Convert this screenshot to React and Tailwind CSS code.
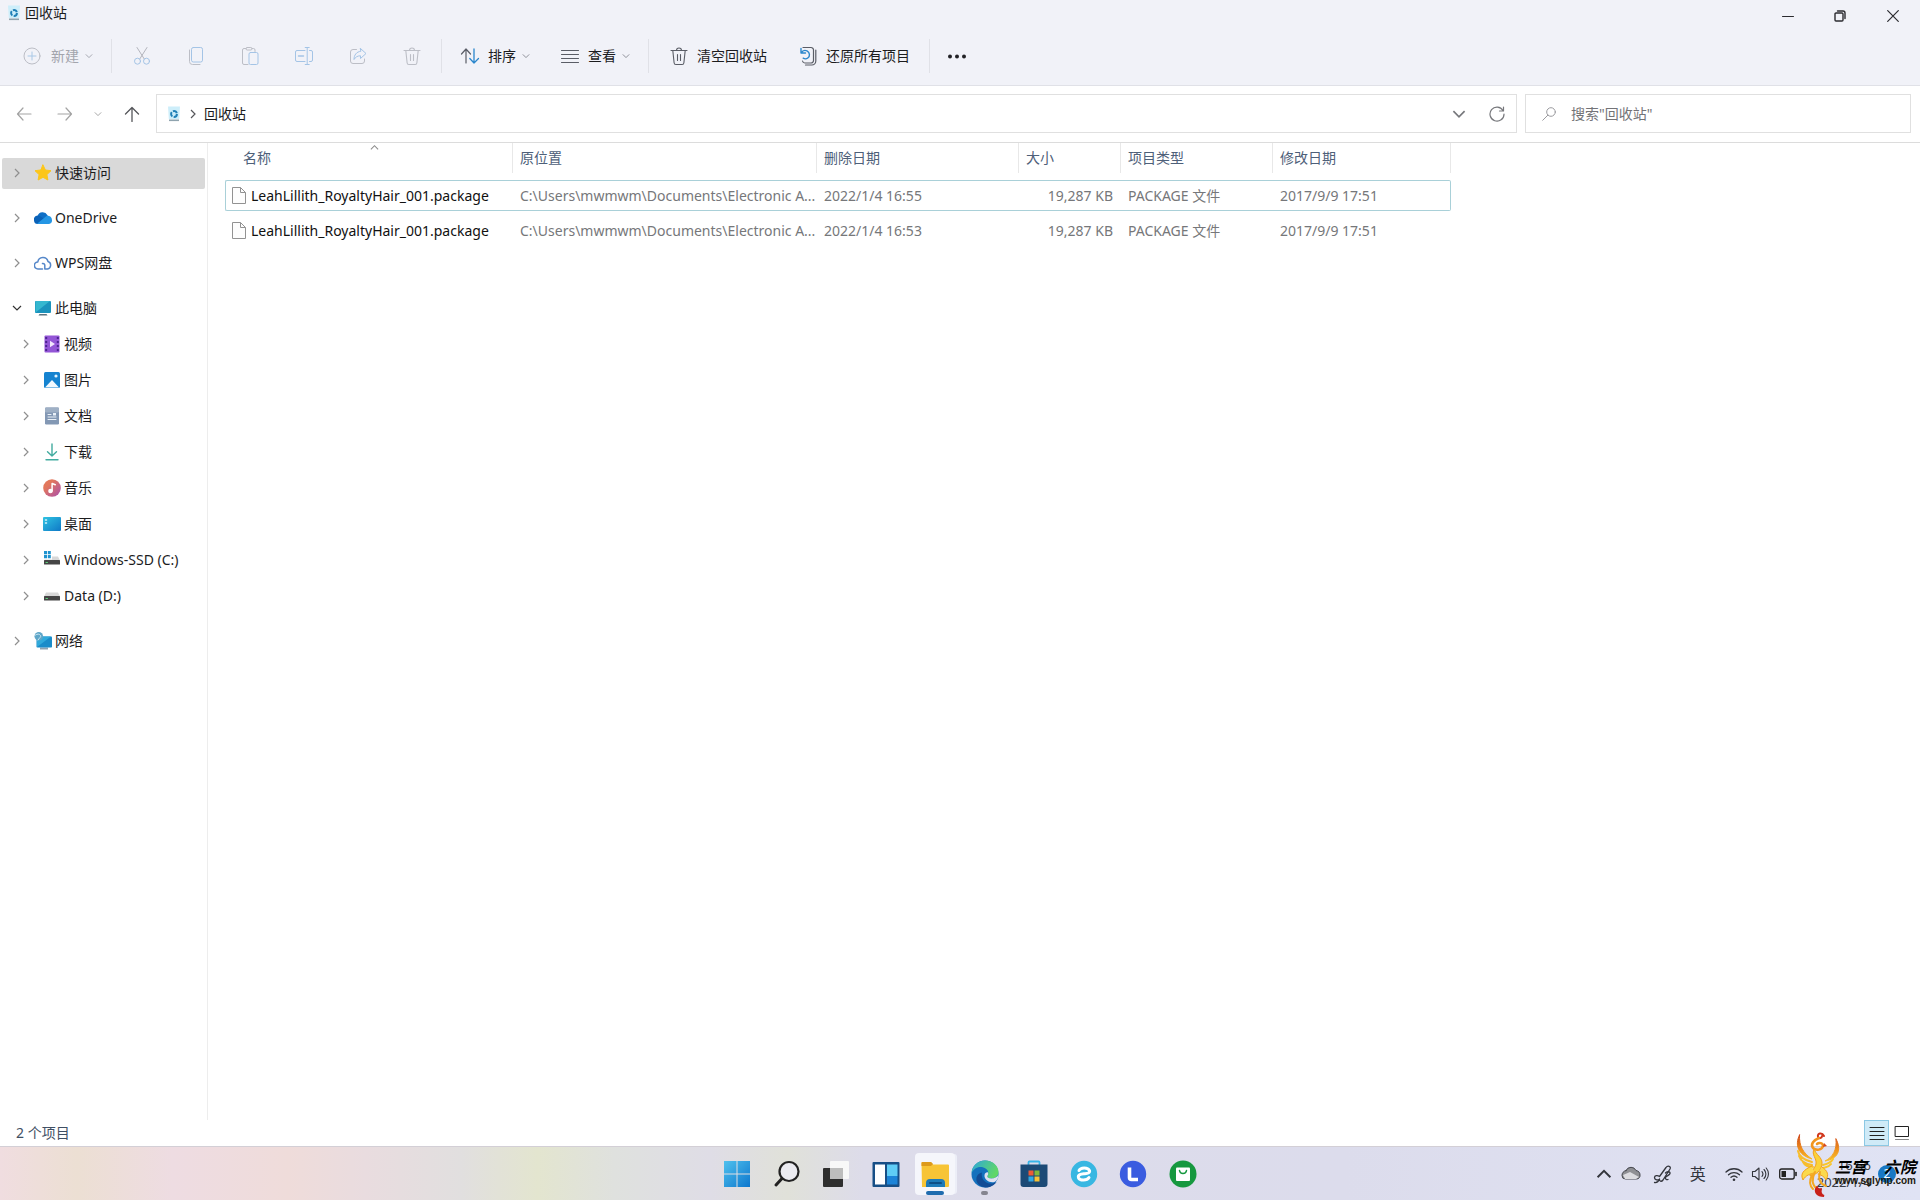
import React from 'react';
import clsx from 'clsx';

/* ---------- toolbar icons ---------- */

const Svg = ({ size = 20, className, children, box }) => (
  <svg
    width={size}
    height={size}
    viewBox={box || `0 0 ${size} ${size}`}
    fill="none"
    strokeLinecap="round"
    strokeLinejoin="round"
    className={clsx('shrink-0', className)}
    aria-hidden="true"
  >
    {children}
  </svg>
);

const RecycleIcon = () => (
  <svg width="12" height="16" viewBox="0 0 12 16" fill="none" className="shrink-0" aria-hidden="true">
    <path d="M0 0.500h12l-.8 12.500H.8z" fill="#cdeefa" />
    <path d="M1 13.500h10v1.600H1z" fill="#8fa3ae" />
    <circle cx="6" cy="8" r="2.900" stroke="#1f7fb6" strokeWidth="2" strokeDasharray="4.800 1.300" />
  </svg>
);

const Chevron = ({ dir = 'right', className, size = 10 }) => {
  const paths = {
    right: 'M3 1l4 4-4 4',
    down: 'M1 3l4 4 4-4',
    up: 'M1 7l4-4 4 4',
  };
  return (
    <svg width={size} height={size} viewBox="0 0 10 10" fill="none" stroke="currentColor" strokeWidth="1.200" className={clsx('shrink-0', className)} aria-hidden="true">
      <path d={paths[dir]} />
    </svg>
  );
};

const PlusIcon = () => (
  <Svg size={18}>
    <circle cx="9" cy="9" r="8" stroke="#bcbec6" />
    <path d="M9 5v8M5 9h8" stroke="#a9c8e6" />
  </Svg>
);

const CutIcon = () => (
  <Svg size={20}>
    <path d="M5 1.500l7.200 11.400M15 1.500L7.800 12.900" stroke="#b4b5bd" />
    <circle cx="5.500" cy="15.200" r="3" stroke="#a4c4e6" />
    <circle cx="14.500" cy="15.200" r="3" stroke="#a4c4e6" />
  </Svg>
);

const CopyIcon = () => (
  <Svg size={20}>
    <rect x="5.500" y="1.500" width="11" height="14.500" rx="1.800" stroke="#a4c4e6" />
    <path d="M3.500 4v11.500a3 3 0 0 0 3 3H14" stroke="#bcbec6" />
  </Svg>
);

const PasteIcon = () => (
  <Svg size={20}>
    <path d="M8 18.500H4a1.500 1.500 0 0 1-1.500-1.500V4A1.500 1.500 0 0 1 4 2.500h2M12 2.500h1.500A1.500 1.500 0 0 1 15 4v1.500" stroke="#bcbec6" />
    <rect x="6" y="1.500" width="6" height="2.500" rx="1.200" stroke="#bcbec6" />
    <rect x="9" y="6.500" width="9" height="12" rx="1.500" stroke="#a4c4e6" />
  </Svg>
);

const RenameIcon = () => (
  <Svg size={20}>
    <path d="M11 4.500H3A1.500 1.500 0 0 0 1.500 6v8A1.500 1.500 0 0 0 3 15.500h8M15.500 4.500h1.500A1.500 1.500 0 0 1 18.500 6v8a1.500 1.500 0 0 1-1.500 1.500h-1.500" stroke="#a4c4e6" />
    <path d="M4.500 10h5" stroke="#a4c4e6" strokeWidth="1.500" />
    <path d="M13.200 2v16M11.200 1.500h4M11.200 18.500h4" stroke="#a4c4e6" />
  </Svg>
);

const ShareIcon = () => (
  <Svg size={20}>
    <path d="M8.500 3.500H5A2.500 2.500 0 0 0 2.500 6v9A2.500 2.500 0 0 0 5 17.500h9a2.500 2.500 0 0 0 2.500-2.500v-2" stroke="#bcbec6" />
    <path d="M12.500 2.500l5.500 5-5.500 5V9.800C9.500 9.800 7.500 11 6 13.500 6 9 8.500 5.800 12.500 5.300z" stroke="#a4c4e6" />
  </Svg>
);

const TrashIcon = ({ color }) => (
  <Svg size={20}>
    <path d="M2 4.500h16M7.500 4.500a2.500 2.500 0 0 1 5 0M3.800 4.500l1.300 12.300a1.800 1.800 0 0 0 1.800 1.700h6.200a1.800 1.800 0 0 0 1.800-1.700l1.300-12.300M8.500 8.500v6M11.500 8.500v6" stroke={color} strokeWidth="1.100" />
  </Svg>
);

const SortIcon = () => (
  <Svg size={20}>
    <path d="M6 17V3M1.500 8L6 3l4.500 5" stroke="#5a5d66" strokeWidth="1.200" />
    <path d="M14 3v14M9.800 12.500L14 17l4.500-4.500" stroke="#2a86cc" strokeWidth="1.300" />
  </Svg>
);

const ViewIcon = () => (
  <Svg size={20}>
    <path d="M1.500 4.500h17M1.500 8.500h17M1.500 12.500h17M1.500 16.500h17" stroke="#5a5d66" strokeWidth="1.100" />
  </Svg>
);

const RestoreIcon = () => (
  <Svg size={20}>
    <path d="M5 1.500h8A2.500 2.500 0 0 1 15.500 4v10.500A2.500 2.500 0 0 1 13 17H7a2.500 2.500 0 0 1-2.500-2" stroke="#5a5d66" strokeWidth="1.200" />
    <path d="M17.800 4v11a4 4 0 0 1-4 4H7.500" stroke="#5a5d66" strokeWidth="1.200" />
    <path d="M3 2.500V7h4.500M3.200 7C4.500 4.500 7 4 9 4.800c3 1.500 3.200 5.500.8 7.200-1.500 1.200-3.300 1-4.600.2" stroke="#2a86cc" strokeWidth="1.400" />
  </Svg>
);

/* ---------- tree icons ---------- */

const StarIcon = () => (
  <Svg size={18}>
    <path d="M9 1l2.400 5 5.600.7-4.100 3.900 1 5.400L9 13.300 4.100 16l1-5.400L1 6.700 6.600 6z" fill="#fcc61a" stroke="#fcc61a" />
  </Svg>
);

const OneDriveIcon = () => (
  <Svg size={18}>
    <path d="M3.500 7A5.500 5.500 0 0 1 13.500 6.200L16 12H3z" fill="#0f6fc6" />
    <path d="M0 11.500A4 4 0 0 1 6.500 7.500l6 3.500-8 4H4A3.800 3.800 0 0 1 0 11.500z" fill="#0a62b8" />
    <path d="M3 14.700L12.500 7a4.200 4.200 0 0 1 5.500 4 3.700 3.700 0 0 1-3.500 4H4.500z" fill="#2596e4" />
  </Svg>
);

const WpsIcon = () => (
  <Svg size={18}>
    <path d="M8.500 15H4A3.500 3.500 0 0 1 3.800 8 5.200 5.200 0 0 1 14 7.500a3.900 3.900 0 0 1-.5 7.500h-2.700V11A2 2 0 0 0 8.500 9.500" stroke="#5587c9" strokeWidth="1.500" />
  </Svg>
);

const PcIcon = () => (
  <Svg size={18}>
    <path d="M5.500 15h7l1 1.500h-9z" fill="#5d7480" />
    <rect x="1" y="2" width="16" height="12" rx="1" fill="#1b93bd" />
    <path d="M1.500 13.500V3a1 1 0 0 1 1-1H16z" fill="#35b7cf" />
  </Svg>
);

const VideoIcon = () => (
  <Svg size={18}>
    <rect x="1.500" y="0.500" width="15" height="17" rx="1" fill="#9355d6" />
    <path d="M3.200 2v14M14.800 2v14" stroke="#4c2391" strokeWidth="2" strokeDasharray="2 2" strokeLinecap="butt" />
    <path d="M7 5.800v6.400l5-3.200z" fill="#f2e6fd" />
  </Svg>
);

const PictureIcon = () => (
  <Svg size={18}>
    <rect x="1" y="1" width="16" height="16" rx="1.500" fill="#1583d0" />
    <path d="M2 16.500l7-7.500 7 7.500z" fill="#f2f9fe" />
    <circle cx="13" cy="5" r="1.600" fill="#e5f4fd" />
  </Svg>
);

const DocIcon = () => (
  <Svg size={18}>
    <rect x="2" y="0.500" width="14" height="17" rx="1.200" fill="#8398b4" />
    <rect x="2" y="0.500" width="14" height="5" rx="1.200" fill="#9fb0c5" />
    <path d="M5 7.500h3M5 10h8M5 12.500h8" stroke="#eaf1f8" />
    <rect x="10" y="6" width="3" height="2.500" fill="#eaf1f8" />
  </Svg>
);

const DownloadIcon = () => (
  <Svg size={18}>
    <path d="M9 1v12M4.500 8.800L9 13l4.500-4.200" stroke="#42ab9f" strokeWidth="1.400" />
    <path d="M3 16.800h12" stroke="#42ab9f" strokeWidth="1.400" />
  </Svg>
);

const MusicIcon = () => (
  <Svg size={18}>
    <defs>
      <linearGradient id="music" x1="0" y1="0" x2="1" y2="1">
        <stop offset="0.300" stopColor="#e2775c" />
        <stop offset="1" stopColor="#a94fae" />
      </linearGradient>
    </defs>
    <circle cx="9" cy="9" r="8.800" fill="url(#music)" />
    <circle cx="7.500" cy="12" r="2.300" fill="#fff" />
    <path d="M9.100 12V4.500l3.200 1.300" stroke="#fff" strokeWidth="1.500" />
  </Svg>
);

const DesktopIcon = () => (
  <Svg size={18}>
    <defs>
      <linearGradient id="desk" x1="0" y1="0" x2="1" y2="1">
        <stop offset="0" stopColor="#2fc3e2" />
        <stop offset="1" stopColor="#0f78c6" />
      </linearGradient>
    </defs>
    <rect x="0" y="2" width="18" height="14" rx="1" fill="url(#desk)" />
    <path d="M2.500 5h1M2.500 8h1" stroke="#d8f5fd" strokeWidth="1.500" />
  </Svg>
);

const DiskIcon = ({ system }) => (
  <Svg size={18}>
    <path d="M3 5.500h12l2 4H1z" fill="#d8d8d8" />
    <rect x="1" y="9" width="16" height="4.500" rx="0.500" fill="#454545" />
    <path d="M3 11.500h1.500" stroke="#5fd07c" />
    {system && (
      <g>
        <rect x="0" y="0" width="9" height="8.500" fill="#fff" />
        <path d="M1 0h3v3.200H1zM4.800 0h3v3.200h-3zM1 4h3v3.200H1zM4.800 4h3v3.200h-3z" fill="#1f93cf" />
      </g>
    )}
  </Svg>
);

const NetworkIcon = () => (
  <Svg size={18}>
    <path d="M6 15.500h8v2H6z" fill="#8fa3b0" />
    <rect x="2.500" y="4.500" width="15.500" height="11" rx="0.800" fill="#1a8cc9" />
    <path d="M3 15V8l6-3.500h8z" fill="#31aadb" />
    <circle cx="4.800" cy="4.300" r="4.300" fill="#5fa6c8" />
    <path d="M1.500 3c2-1.500 4-1 5 .5S5 6 4 8" stroke="#cde7f2" />
  </Svg>
);

const FileIcon = () => (
  <svg width="14" height="17" viewBox="0 0 14 17" fill="none" className="shrink-0" aria-hidden="true">
    <path d="M.5.5h8l5 5v11H.5z" fill="#fdfdfd" stroke="#929292" />
    <path d="M8.500.5v5h5" stroke="#929292" />
  </svg>
);

/* ---------- data ---------- */

const tree = [
  { label: '快速访问', icon: <StarIcon />, selected: true },
  { label: 'OneDrive', icon: <OneDriveIcon /> },
  { label: 'WPS网盘', icon: <WpsIcon /> },
  {
    label: '此电脑',
    icon: <PcIcon />,
    children: [
      { label: '视频', icon: <VideoIcon /> },
      { label: '图片', icon: <PictureIcon /> },
      { label: '文档', icon: <DocIcon /> },
      { label: '下载', icon: <DownloadIcon /> },
      { label: '音乐', icon: <MusicIcon /> },
      { label: '桌面', icon: <DesktopIcon /> },
      { label: 'Windows-SSD (C:)', icon: <DiskIcon system /> },
      { label: 'Data (D:)', icon: <DiskIcon /> },
    ],
  },
  { label: '网络', icon: <NetworkIcon /> },
];

const files = [
  {
    name: 'LeahLillith_RoyaltyHair_001.package',
    from: 'C:\\Users\\mwmwm\\Documents\\Electronic A...',
    deleted: '2022/1/4 16:55',
    size: '19,287 KB',
    type: 'PACKAGE 文件',
    modified: '2017/9/9 17:51',
    focused: true,
  },
  {
    name: 'LeahLillith_RoyaltyHair_001.package',
    from: 'C:\\Users\\mwmwm\\Documents\\Electronic A...',
    deleted: '2022/1/4 16:53',
    size: '19,287 KB',
    type: 'PACKAGE 文件',
    modified: '2017/9/9 17:51',
  },
];

/* ---------- window parts ---------- */

const TitleBar = () => (
  <header className="flex h-8 items-start justify-between">
    <div className="flex h-[26px] items-center gap-[5px] pl-2">
      <RecycleIcon />
      <h1>回收站</h1>
    </div>
    <div className="flex h-8 text-[#2b2b2f]">
      <button aria-label="最小化" className="grid w-[52px] place-items-center">
        <Svg size={12}><path d="M0.500 6.500h11" stroke="currentColor" /></Svg>
      </button>
      <button aria-label="还原" className="grid w-[52px] place-items-center">
        <Svg size={12}>
          <rect x="1" y="3" width="8" height="8" rx="1" stroke="currentColor" strokeWidth="1.400" />
          <path d="M3.500 1H9a2 2 0 0 1 2 2v5.500" stroke="currentColor" strokeWidth="1.400" />
        </Svg>
      </button>
      <button aria-label="关闭" className="grid w-[54px] place-items-center">
        <Svg size={12}><path d="M.7.7l10.600 10.600M11.300.7L.7 11.300" stroke="currentColor" strokeWidth="1.200" /></Svg>
      </button>
    </div>
  </header>
);

const Divider = () => <span className="h-[34px] w-px bg-[#e0e1e7]" />;

const IconTool = ({ label, children }) => (
  <button disabled aria-label={label} className="grid h-9 w-[54px] place-items-center">
    {children}
  </button>
);

const Toolbar = () => (
  <div role="toolbar" className="flex h-12 items-center">
    <button disabled className="flex w-[111px] items-center pl-[23px] text-[#a3a5ad]">
      <PlusIcon />
      <span className="pr-[6px] pl-[10px]">新建</span>
      <Chevron dir="down" size={8} />
    </button>
    <Divider />
    <div className="flex w-[329px] pl-[3px]">
      <IconTool label="剪切"><CutIcon /></IconTool>
      <IconTool label="复制"><CopyIcon /></IconTool>
      <IconTool label="粘贴"><PasteIcon /></IconTool>
      <IconTool label="重命名"><RenameIcon /></IconTool>
      <IconTool label="共享"><ShareIcon /></IconTool>
      <IconTool label="删除"><TrashIcon color="#bcbec6" /></IconTool>
    </div>
    <Divider />
    <div className="flex w-[206px] gap-[30px] pl-[18px]">
      <button className="flex items-center">
        <SortIcon />
        <span className="pr-[6px] pl-2">排序</span>
        <Chevron dir="down" size={8} className="text-[#8a8c94]" />
      </button>
      <button className="flex items-center">
        <ViewIcon />
        <span className="pr-[6px] pl-2">查看</span>
        <Chevron dir="down" size={8} className="text-[#8a8c94]" />
      </button>
    </div>
    <Divider />
    <div className="flex w-[280px] gap-[31px] pl-5">
      <button className="flex items-center gap-2">
        <TrashIcon color="#5a5d66" />
        清空回收站
      </button>
      <button className="flex items-center gap-2">
        <RestoreIcon />
        还原所有项目
      </button>
    </div>
    <Divider />
    <button aria-label="查看更多" className="grid h-9 w-[54px] place-items-center">
      <Svg size={20}>
        <g fill="#222226">
          <circle cx="3" cy="10.500" r="2" />
          <circle cx="10" cy="10.500" r="2" />
          <circle cx="17" cy="10.500" r="2" />
        </g>
      </Svg>
    </button>
  </div>
);

const AddressRow = () => (
  <div className="flex items-center border-b border-[#dcdcdc] pt-2 pr-[9px] pb-[9px] pl-4">
    <nav className="flex w-[140px] items-center text-[#a3a3a3]" aria-label="导航">
      <button aria-label="后退" className="grid size-4 place-items-center">
        <Svg size={16}><path d="M15 8H1.500M7 2L1.500 8 7 14" stroke="currentColor" strokeWidth="1.200" /></Svg>
      </button>
      <button aria-label="前进" className="ml-[25px] grid size-4 place-items-center">
        <Svg size={16}><path d="M1 8h13.500M9 2l5.500 6L9 14" stroke="currentColor" strokeWidth="1.200" /></Svg>
      </button>
      <button aria-label="最近位置" className="ml-[17px] grid size-4 place-items-center">
        <Chevron dir="down" size={8} />
      </button>
      <button aria-label="向上" className="ml-[18px] grid size-4 place-items-center text-[#55565a]">
        <Svg size={16}><path d="M8 15.500V1.500M1.500 8L8 1.500 14.500 8" stroke="currentColor" strokeWidth="1.300" /></Svg>
      </button>
    </nav>
    <div className="flex h-[39px] flex-1 items-center border border-[#e0e0e0] pr-[11px] pl-[11px]">
      <RecycleIcon />
      <Chevron className="mr-[6px] ml-2 text-[#55565a]" />
      <span className="flex-1">回收站</span>
      <button aria-label="以前的位置" className="mr-[23px] text-[#77787c]">
        <Chevron dir="down" size={14} />
      </button>
      <button aria-label="刷新" className="text-[#77787c]">
        <Svg size={16}>
          <path d="M14 4.500A7 7 0 1 0 15 8M14.500 1v4h-4" stroke="currentColor" strokeWidth="1.200" />
        </Svg>
      </button>
    </div>
    <label className="ml-2 flex h-[39px] w-[386px] items-center border border-[#e0e0e0] pl-4">
      <Svg size={14} className="mr-[15px]">
        <circle cx="9" cy="5" r="4.300" stroke="#9b9b9f" />
        <path d="M5.800 8.200L.7 13.300" stroke="#9b9b9f" />
      </Svg>
      <input
        type="text"
        aria-label="搜索"
        placeholder={'搜索"回收站"'}
        className="w-full bg-transparent outline-none placeholder:text-[#737377]"
      />
    </label>
  </div>
);

const TreeItem = ({ item, level = 0 }) => (
  <li>
    <div className="flex h-9 items-center pl-[2px]">
      <button
        className={clsx(
          'flex h-[31px] w-[203px] items-center rounded-[2px]',
          level ? 'pl-[19px]' : 'pl-[10px]',
          item.selected && 'bg-[#d9d9d9]'
        )}
      >
        <Chevron
          dir={item.children ? 'down' : 'right'}
          className={item.children ? 'text-[#333]' : 'text-[#8f8f8f]'}
        />
        <span className="pr-[3px] pl-3">{item.icon}</span>
        {item.label}
      </button>
    </div>
    {item.children && (
      <ul>
        {item.children.map((child) => (
          <TreeItem key={child.label} item={child} level={level + 1} />
        ))}
      </ul>
    )}
  </li>
);

const HeaderCell = ({ children, className, first }) => (
  <th scope="col" className="h-[33px] p-0 text-left align-top font-normal">
    <div className={clsx('relative flex h-[30px] items-center border-r border-[#e8e8e8]', className)}>
      {first && <Chevron dir="up" size={9} className="absolute top-0 left-[145px] text-[#8b8b8b]" />}
      {children}
    </div>
  </th>
);

const FileTable = () => (
  <table className="-mt-1 w-[1226px] table-fixed border-separate border-spacing-x-0 border-spacing-y-1 whitespace-nowrap">
    <colgroup>
      <col className="w-[288px]" />
      <col className="w-[304px]" />
      <col className="w-[202px]" />
      <col className="w-[102px]" />
      <col className="w-[152px]" />
      <col className="w-[178px]" />
    </colgroup>
    <thead className="text-[#4e6079]">
      <tr>
        <HeaderCell first className="pl-[18px]">名称</HeaderCell>
        <HeaderCell className="pl-[7px]">原位置</HeaderCell>
        <HeaderCell className="pl-[7px]">删除日期</HeaderCell>
        <HeaderCell className="pl-[7px]">大小</HeaderCell>
        <HeaderCell className="pl-[7px]">项目类型</HeaderCell>
        <HeaderCell className="pl-[7px]">修改日期</HeaderCell>
      </tr>
    </thead>
    <tbody className="text-[#76777a]">
      {files.map((file) => {
        const line = file.focused ? 'border-[#a9d0d8]' : 'border-transparent';
        const cell = clsx('h-[31px] border-y py-0 pr-2 pl-[7px]', line);
        return (
          <tr key={file.deleted}>
            <td className={clsx('h-[31px] rounded-l-[2px] border-y border-l py-0 pr-2 pl-[6px] text-[#111]', line)}>
              <div className="flex items-center gap-[5px]">
                <FileIcon />
                {file.name}
              </div>
            </td>
            <td className={cell}>{file.from}</td>
            <td className={cell}>{file.deleted}</td>
            <td className={clsx(cell, 'text-right')}>{file.size}</td>
            <td className={cell}>{file.type}</td>
            <td className={clsx(cell, 'rounded-r-[2px] border-r')}>{file.modified}</td>
          </tr>
        );
      })}
    </tbody>
  </table>
);

const StatusBar = () => (
  <footer className="flex h-[26px] items-center justify-between pr-[5px] pl-4 text-[#3f4f63]">
    <span>2 个项目</span>
    <div className="flex items-center">
      <button aria-label="详细信息" className="grid h-[26px] w-[25px] place-items-center border border-[#8cc8e4] bg-[#cfeaf7]">
        <Svg size={16} className="text-[#222]">
          <path d="M1 2.500h14M1 6.500h14M1 10.500h14M1 14.500h14" stroke="currentColor" />
        </Svg>
      </button>
      <button aria-label="大图标" className="grid h-[26px] w-[26px] place-items-center">
        <Svg size={16} className="text-[#222]">
          <rect x="1.500" y="1.500" width="13" height="10" stroke="currentColor" />
          <path d="M1.500 14.500h13" stroke="#888" />
        </Svg>
      </button>
    </div>
  </footer>
);

/* ---------- taskbar ---------- */

const StartIcon = () => (
  <Svg size={28}>
    <defs>
      <linearGradient id="start" x1="0" y1="0" x2="28" y2="28" gradientUnits="userSpaceOnUse">
        <stop offset="0" stopColor="#52c4ef" />
        <stop offset="1" stopColor="#0a74cc" />
      </linearGradient>
    </defs>
    <path d="M1 1h12.500v12.500H1zM14.500 1H27v12.500H14.500zM1 14.500h12.500V27H1zM14.500 14.500H27V27H14.500z" fill="url(#start)" />
  </Svg>
);

const SearchIcon = () => (
  <Svg size={28}>
    <circle cx="16" cy="11.500" r="9.500" stroke="#222" strokeWidth="2.200" fill="#ebebf0" />
    <path d="M9 18.500L3 25" stroke="#222" strokeWidth="3" />
  </Svg>
);

const TaskViewIcon = () => (
  <Svg size={28}>
    <rect x="1" y="8" width="20" height="19" rx="1" fill="#2e2e2e" />
    <rect x="8" y="1" width="19" height="18" rx="1" fill="#f8f8f8" />
    <rect x="8" y="8" width="13" height="11" fill="#bdbdbd" />
  </Svg>
);

const WidgetsIcon = () => (
  <Svg size={28}>
    <rect x="0.500" y="2" width="27" height="25" rx="1" fill="#174f86" />
    <rect x="3" y="4.500" width="10" height="20" fill="#fff" />
    <rect x="15" y="4.500" width="10.500" height="11.500" fill="#5fcdf6" />
    <rect x="15" y="16" width="10.500" height="8.500" fill="#1c84d8" />
  </Svg>
);

const ExplorerIcon = () => (
  <Svg size={28}>
    <path d="M0.500 3a1 1 0 0 1 1-1H10l2 2.500h15a1 1 0 0 1 1 1V26a1 1 0 0 1-1 1h-26z" fill="#f7c436" />
    <path d="M.5 3a1 1 0 0 1 1-1H10l2 2-2 2H.5z" fill="#dd9a1c" />
    <path d="M5 27v-4a4 4 0 0 1 4-4h11a4 4 0 0 1 4 4v4z" fill="#1d7ab8" />
    <path d="M9 23h11" stroke="#0d4f86" strokeWidth="2" />
  </Svg>
);

const EdgeIcon = () => (
  <Svg size={28}>
    <defs>
      <linearGradient id="edgeTop" x1="0" y1="0" x2="1" y2="0.400">
        <stop offset="0" stopColor="#2da6dc" />
        <stop offset="1" stopColor="#5fd768" />
      </linearGradient>
    </defs>
    <circle cx="14" cy="14" r="13.500" fill="#1471bd" />
    <path d="M0.500 13.500C1 5.500 7 .5 14 .5c8 0 13.500 5.500 13.500 11.500 0 4-3 6.500-7 6.500-3 0-4.500-1.200-4.200-2.500.8-1 1-2 1-3C17.300 9.500 13.500 7 9.500 7 5.500 7 2 9.500.5 13.500z" fill="url(#edgeTop)" />
    <path d="M11 12.500c-1.500 5 2.500 11 8.500 11 2.500 0 4.500-.6 6-1.500-2.200 3.500-6.500 5.500-11 5.500C8 27 4.500 22 5.500 17.500c.6-2.500 2.500-4.300 5.500-5z" fill="#124c95" />
    <path d="M16.300 16c-.3 1.300 1.200 2.500 4.200 2.500 3 0 5.500-1.200 6.800-3.500.2 3-1.500 6.800-5 7.200-4.800.5-9.300-3-8.800-7.200.4-2 2-3 3.500-2.500.5 1.300.1 2.500-.7 3.500z" fill="#dfe1f0" />
  </Svg>
);

const StoreIcon = () => (
  <Svg size={28}>
    <path d="M8.500 5V2.500a1 1 0 0 1 1-1h9a1 1 0 0 1 1 1V5" stroke="#38b4e8" strokeWidth="1.800" />
    <path d="M0.500 4.500h27V24a3 3 0 0 1-3 3h-21a3 3 0 0 1-3-3z" fill="#1c4a76" />
    <path d="M8.500 10.500h5v5h-5z" fill="#ee5a35" />
    <path d="M14.500 10.500h5v5h-5z" fill="#81b83a" />
    <path d="M8.500 16.500h5v5h-5z" fill="#31a7e2" />
    <path d="M14.500 16.500h5v5h-5z" fill="#f8c234" />
  </Svg>
);

const BrowserIcon = () => (
  <Svg size={28}>
    <circle cx="14" cy="14" r="13.200" fill="#38b7e2" />
    <path d="M9 10.500C10.500 7 18 7 19.500 10.500c.8 3-3 3-5.500 3.300s-6.500.7-5.500 4c1.500 3.200 8.500 3 10.500-.3" stroke="#fff" strokeWidth="3" />
  </Svg>
);

const LenovoIcon = () => (
  <Svg size={28}>
    <circle cx="14" cy="14" r="13.200" fill="#3a5ce0" />
    <path d="M10.500 7.500v10a2 2 0 0 0 2 2H19" stroke="#fff" strokeWidth="3.600" strokeLinecap="butt" />
  </Svg>
);

const ShopIcon = () => (
  <Svg size={28}>
    <circle cx="14" cy="14" r="13.500" fill="#16983f" />
    <rect x="7" y="7.500" width="14" height="13.500" rx="1" fill="#fff" />
    <path d="M10.500 10.500c.5 4 6.500 4 7 0" stroke="#16983f" strokeWidth="1.500" />
  </Svg>
);

const apps = [
  { name: '开始', icon: <StartIcon /> },
  { name: '搜索', icon: <SearchIcon /> },
  { name: '任务视图', icon: <TaskViewIcon /> },
  { name: '小组件', icon: <WidgetsIcon /> },
  { name: '文件资源管理器', icon: <ExplorerIcon />, state: 'active' },
  { name: 'Microsoft Edge', icon: <EdgeIcon />, state: 'running' },
  { name: 'Microsoft Store', icon: <StoreIcon /> },
  { name: '浏览器', icon: <BrowserIcon /> },
  { name: '联想电脑管家', icon: <LenovoIcon /> },
  { name: '应用商店', icon: <ShopIcon /> },
];

const TrayIcons = () => (
  <div className="flex items-center text-[#33353c]">
    <button aria-label="显示隐藏的图标" className="mr-[9px]">
      <Chevron dir="up" size={16} />
    </button>
    <Svg size={20} className="mr-3">
      <path d="M5 6.500a5.500 5.500 0 0 1 10 0c3 .5 4 2.500 4 4.500a3.500 3.500 0 0 1-3.500 4h-11A3.500 3.500 0 0 1 1 11.500c0-2.500 1.500-4.500 4-5z" fill="#8f9094" stroke="#44464c" />
      <path d="M2 11l7-3 9 5-3 2H4z" fill="#dcdce0" />
    </Svg>
    <Svg size={20} className="mr-[17px]">
      <path d="M1.500 18.500c2.500.5 4-1 5-3.500M6 15.500c-2 1-4.500 0-4.500-2s3-2.500 5-1L13 3.500c1.500-2.300 5.500-1.500 4 1.500l-7 11c-1.500 2-4 1.500-3.500-1M12.500 9c1.500-2 5-1.500 4.500.5s-3.500 2-4.500 4c-.5 1.500 1 2.500 2.500 2" stroke="currentColor" strokeWidth="1.300" />
    </Svg>
    <button className="mr-[19px] text-base">英</button>
    <Svg size={18} className="mr-2">
      <path d="M1 7a11.500 11.500 0 0 1 16 0M3.500 9.800a8 8 0 0 1 11 0M6 12.300a4.500 4.500 0 0 1 6 0" stroke="currentColor" strokeWidth="1.300" />
      <circle cx="9" cy="14.800" r="1.300" fill="currentColor" />
    </Svg>
    <Svg size={18} className="mr-[10px]">
      <path d="M1.500 6.500v5h2.500l4 3.500V3L4 6.500zM11 6.500c1.200 1.500 1.200 3.500 0 5M13 4.500c2.500 2.500 2.500 6.500 0 9M15.200 3c3 3.500 3 8.500 0 12" stroke="currentColor" strokeWidth="1.100" />
    </Svg>
    <Svg size={18} className="text-[#222]">
      <rect x="0.700" y="4" width="14.500" height="10" rx="2" stroke="currentColor" strokeWidth="1.300" />
      <rect x="2.500" y="6" width="4.500" height="6" fill="currentColor" />
      <path d="M17 7.500v3" stroke="currentColor" strokeWidth="1.600" />
    </Svg>
  </div>
);

const Taskbar = () => (
  <div className="grid h-[54px] grid-cols-[1fr_486px_1fr] items-center border-t border-[#d3cfd6] bg-[linear-gradient(90deg,#f0dde0_0%,#ecdfd3_4%,#eedce2_9%,#efdcda_15%,#e9dcdf_19%,#e1dfdf_24%,#e3e5cf_28%,#dfe1de_32%,#dfdde6_37%,#e0e1d9_41%,#dddcea_45%,#dcdcec_70%,#e0e3f4_100%)]">
    <div />
    <div className="flex justify-between">
      {apps.map((app) => (
        <button
          key={app.name}
          aria-label={app.name}
          className={clsx(
            'relative grid h-[42px] w-10 place-items-center rounded-[4px]',
            app.state === 'active' && 'bg-[#f5f6fb] shadow-[3px_0_0_-1px_#eceef7]'
          )}
        >
          {app.icon}
          {app.state === 'active' && <span className="absolute bottom-0 h-1 w-[18px] rounded-full bg-[#1f6cae]" />}
          {app.state === 'running' && <span className="absolute bottom-0 h-1 w-[7px] rounded-full bg-[#85858f]" />}
        </button>
      ))}
    </div>
    <div className="flex items-center justify-end pr-6">
      <TrayIcons />
      <div className="ml-5 flex items-center">
        <div className="text-right text-[13px] leading-[17px] text-[#3a3c44]">
          <p>16:56</p>
          <p>2022/1/4</p>
        </div>
        <span className="ml-[7px] grid size-[18px] place-items-center rounded-full bg-[#1878c4] text-xs text-white">2</span>
      </div>
    </div>
  </div>
);

const Phoenix = () => (
  <svg width="46" height="68" viewBox="0 0 46 68" fill="none" strokeLinecap="round" className="shrink-0" aria-hidden="true">
    <defs>
      <linearGradient id="flame" x1="0" y1="0" x2="0" y2="68" gradientUnits="userSpaceOnUse">
        <stop offset="0" stopColor="#c5301c" />
        <stop offset="0.300" stopColor="#f0941c" />
        <stop offset="0.550" stopColor="#fcd832" />
        <stop offset="0.750" stopColor="#f4a420" />
        <stop offset="1" stopColor="#c81e18" />
      </linearGradient>
    </defs>
    {/* wings */}
    <path d="M4.500 5C-.5 15 3 25 17 29 8 23 4 16 4.500 5z" fill="url(#flame)" stroke="url(#flame)" />
    <path d="M41 9c6 11 2 20-11 22 8-4 12-11 11-22z" fill="url(#flame)" stroke="url(#flame)" />
    <path d="M3 21c1 6 6 9 14 11M4 26c2 6 7 8 13 9M8 32c2 4 6 5 10 5" stroke="#f7bd2c" strokeWidth="2" />
    <path d="M38 29c-2 4-6 5-10 6M36 34c-2 3-5 3-8 4" stroke="#f9c52c" strokeWidth="2" />
    {/* head and neck */}
    <path d="M29 6c-2-4-7-3-6 1 1 2 4 1 4-1" stroke="#d0361c" strokeWidth="2" />
    <path d="M24 8c-5 2-9 6-6 10 3 3 9 2 10-2 0-3-4-4-6-2" stroke="#f2951e" strokeWidth="2.500" />
    <path d="M29 13l3 3-4 1z" fill="#d8481c" />
    {/* body */}
    <path d="M19 19c-3 6 3 9 2 15-1 5-6 7-6 12 5-1 12-5 12-13 0-6-6-8-8-14z" fill="#fbd23a" stroke="#f2a01e" />
    <path d="M17 36C8 40 5 44 8 50c3-5 7-6 11-7M27 37c6 4 7 8 4 13-2-4-5-5-8-6" fill="#fbd94c" stroke="#f2a01e" />
    {/* tail feathers */}
    <path d="M20 42c-4 8-3 13 2 17M25 42c-2 7 0 12 6 14M17 45c-3 6-2 11 1 14" stroke="#f3a822" strokeWidth="2" />
    <path d="M22 57c-3 5 0 9 7 9-3-1-4-4-3-7" stroke="#c8201a" strokeWidth="2" fill="#c8201a" />
  </svg>
);

const Watermark = () => (
  <div className="pointer-events-none absolute right-1 bottom-[2px] flex items-center">
    <Phoenix />
    <div className="-ml-[6px] pt-4 text-black">
      <p className="flex justify-between font-['Noto_Sans_CJK_SC',sans-serif] text-base leading-[17px] font-bold italic">
        <span>三宫</span>
        <span>六院</span>
      </p>
      <p className="font-['Liberation_Sans',sans-serif] text-[10px] leading-3 font-bold text-[#1c1a10]">www.sglynp.com</p>
    </div>
  </div>
);

const App = () => (
  <div className="relative flex min-h-screen flex-col bg-white font-['Noto_Sans','Noto_Sans_CJK_SC',sans-serif] text-[14px] leading-5 text-[#1c1c1e]">
    <div className="border-b border-[#e0e1e7] bg-[#f1f2f8] pb-[5px]">
      <TitleBar />
      <Toolbar />
    </div>
    <AddressRow />
    <main className="flex flex-1">
      <aside className="w-[208px] shrink-0 border-r border-[#ededed] pt-3">
        <ul className="flex flex-col gap-[9px]">
          {tree.map((item) => (
            <TreeItem key={item.label} item={item} />
          ))}
        </ul>
      </aside>
      <section className="flex-1 pl-[17px]">
        <FileTable />
      </section>
    </main>
    <StatusBar />
    <Taskbar />
    <Watermark />
  </div>
);

export default App;
